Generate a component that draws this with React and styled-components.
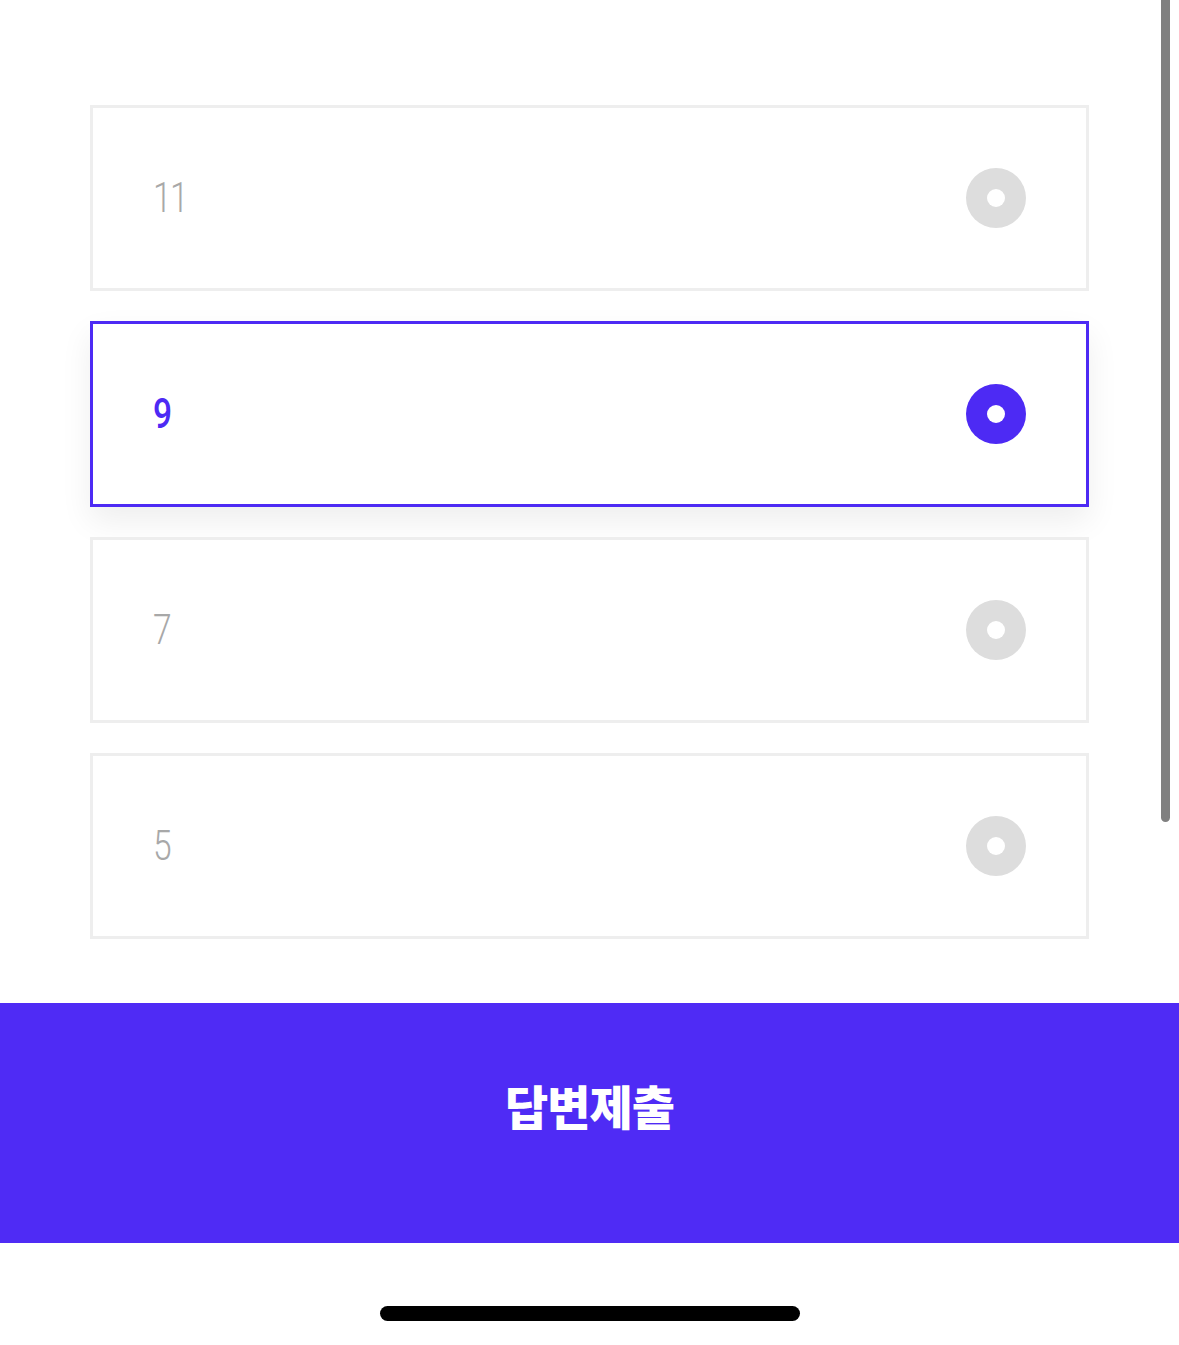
import React, { useState } from "react";
import styled, { createGlobalStyle } from "styled-components";

const Global = createGlobalStyle`
  html, body {
    margin: 0;
    padding: 0;
    background: #ffffff;
  }
  * {
    box-sizing: border-box;
  }
`;

const Screen = styled.div`
  position: relative;
  width: 1179px;
  height: 1345px;
  background: #ffffff;
  display: flex;
  flex-direction: column;
  overflow: hidden;
  font-family: Roboto, "Noto Sans", "Noto Sans CJK KR", sans-serif;
`;

const Options = styled.div`
  display: flex;
  flex-direction: column;
  gap: 30px;
  padding: 105px 90px 0 90px;
`;

const Option = styled.button`
  display: flex;
  align-items: center;
  justify-content: space-between;
  height: 186px;
  width: 100%;
  padding: 0 60px;
  background: #ffffff;
  border: 3px solid ${(p) => (p.$active ? "#4d2af4" : "#eeeeee")};
  box-shadow: ${(p) =>
    p.$active ? "0 14px 30px rgba(0, 0, 0, 0.07)" : "none"};
  cursor: pointer;
  font-family: inherit;
`;

const Label = styled.span`
  font-size: 42px;
  font-weight: ${(p) => (p.$active ? 500 : 300)};
  color: ${(p) => (p.$active ? "#4d2af4" : "#a8a8a8")};
  transform: scaleX(0.8);
  transform-origin: left center;
  letter-spacing: -2px;
  line-height: 1;
`;

const Radio = styled.span`
  width: 60px;
  height: 60px;
  border-radius: 50%;
  background: ${(p) => (p.$active ? "#4d2af4" : "#dddddd")};
  display: flex;
  align-items: center;
  justify-content: center;

  &::after {
    content: "";
    width: 18px;
    height: 18px;
    border-radius: 50%;
    background: #ffffff;
  }
`;

const Submit = styled.button`
  margin-top: 64px;
  height: 240px;
  width: 100%;
  padding: 0 0 38px 0;
  border: none;
  background: #4f2bf5;
  color: #ffffff;
  font-family: "Noto Sans CJK KR", "Noto Sans", sans-serif;
  font-size: 47px;
  font-weight: 900;
  letter-spacing: -1px;
  cursor: pointer;
`;

const HomeArea = styled.div`
  flex: 1;
  display: flex;
  justify-content: center;
  padding-top: 63px;
`;

const HomeBar = styled.div`
  width: 420px;
  height: 15px;
  border-radius: 8px;
  background: #000000;
`;

const ScrollThumb = styled.div`
  position: absolute;
  top: 0;
  right: 9px;
  width: 9px;
  height: 822px;
  border-radius: 0 0 5px 5px;
  background: #808080;
`;

const answers = ["11", "9", "7", "5"];

export default function App() {
  const [picked, setPicked] = useState("9");
  return (
    <Screen>
      <Global />
      <Options>
        {answers.map((a) => (
          <Option key={a} $active={picked === a} onClick={() => setPicked(a)}>
            <Label $active={picked === a}>{a}</Label>
            <Radio $active={picked === a} />
          </Option>
        ))}
      </Options>
      <Submit>답변제출</Submit>
      <HomeArea>
        <HomeBar />
      </HomeArea>
      <ScrollThumb />
    </Screen>
  );
}
